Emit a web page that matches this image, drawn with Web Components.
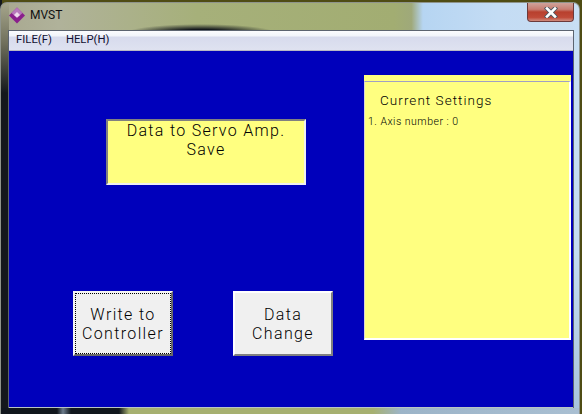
<!DOCTYPE html>
<html>
<head>
<meta charset="utf-8">
<title>MVST</title>
<style>
  html, body { margin: 0; padding: 0; background: #5b5a20; }
  body { width: 582px; height: 414px; overflow: hidden; }
</style>
</head>
<body>
<mvst-window>
  <mvst-menu slot="menu"></mvst-menu>
  <mvst-panel slot="save">Data to Servo Amp.<br>Save</mvst-panel>
  <mvst-button slot="write" focused>Write to<br>Controller</mvst-button>
  <mvst-button slot="change">Data<br>Change</mvst-button>
  <mvst-settings slot="settings"></mvst-settings>
</mvst-window>

<script>
class MvstWindow extends HTMLElement {
  constructor() {
    super();
    this.attachShadow({ mode: "open" });
    this.shadowRoot.innerHTML = `<style>
      :host {
        display: block;
        width: 582px;
        height: 414px;
        box-sizing: border-box;
        padding-top: 2px;
        background: linear-gradient(90deg, #14181c 0, #14181c 2px, #4f4c14 2px);
        font-family: Roboto, sans-serif;
      }
      .glass {
        height: 412px;
        box-sizing: border-box;
        margin-right: 2px;
        padding: 0 5px 6px 7px;
        border: 1px solid #8f948c;
        border-bottom: none;
        border-radius: 7px 7px 0 0;
        display: flex;
        flex-direction: column;
        background:
          linear-gradient(90deg, #10161c 0, #10161c 56px, #6c7c8c 62px, #10161c 70px, #10161c 118px, #a6b070 128px, #a6b070 372px, #9cb4c8 400px, #a9bfd2 100%) bottom / 100% 6px no-repeat,
          linear-gradient(#a6a68c 0, #70705c 40px, #14181c 90px, #14181c 100%) left / 8px 100% no-repeat,
          linear-gradient(#c8dff4 0, #c4dcf2 60%, #a8c4dc 100%) right / 6px 100% no-repeat,
          radial-gradient(ellipse 75px 9px at 200px 30px, #14181c 0, #14181c 40%, rgba(20,24,28,0) 100%),
          linear-gradient(90deg, #a8a890 0, #b0b29a 10%, #a6b07a 34%, #a2ad72 68%, #9fa97a 71%, #b6d5f2 73%, #c4dcf4 86%, #c8def2 100%);
      }
      .title {
        height: 27px;
        flex: none;
        display: flex;
        align-items: center;
        gap: 5px;
        position: relative;
        padding: 0 0 3px 1px;
        box-sizing: border-box;
        font-size: 12px;
        color: #101010;
      }
      .title svg { flex: none; }
      .close {
        position: absolute;
        top: 0;
        right: 0;
        width: 47px;
        height: 19px;
        box-sizing: border-box;
        border: 1px solid #6c3a3a;
        border-top: none;
        border-radius: 0 0 4px 4px;
        background: linear-gradient(#cfa29a 0, #c87e72 35%, #b8402e 50%, #c04a38 80%, #d08c7e 100%);
        display: flex;
        align-items: center;
        justify-content: center;
      }
      .client {
        flex: 1;
        display: flex;
        flex-direction: column;
        border: 1px solid #5c6470;
        border-bottom: none;
        background: #0000bb;
        min-height: 0;
      }
      .body {
        flex: 1;
        display: flex;
        min-height: 0;
        box-sizing: border-box;
        padding: 24px 2px 0 64px;
        border-bottom: 1px solid #b8c4c4;
      }
      .left {
        width: 291px;
        flex: none;
        display: flex;
        flex-direction: column;
        justify-content: space-between;
        height: 281px;
      }
      .save { padding: 44px 0 0 33px; }
      .buttons { display: flex; gap: 60px; }
      .right { flex: 1; height: 265px; display: flex; }
    </style>
    <div class="glass">
      <div class="title">
        <svg width="16" height="17" viewBox="0 0 16 17">
          <path d="M8 0.5 16 8.5 8 16.5 0 8.5Z" fill="#8a1f8c"/>
          <path d="M8 0.5 13.5 6 8 11 2.5 6Z" fill="#b878bc"/>
          <path d="M8 5 11 8 8 10.5 5 8Z" fill="#efd8ec"/>
        </svg>
        <span>MVST</span>
        <div class="close">
          <svg width="14" height="11" viewBox="0 0 14 11">
            <path d="M3 1.5 11 9.5M11 1.5 3 9.5" stroke="#4a5660" stroke-width="4.4" stroke-linecap="square"/>
            <path d="M3 1.5 11 9.5M11 1.5 3 9.5" stroke="#fff" stroke-width="2.6" stroke-linecap="square"/>
          </svg>
        </div>
      </div>
      <div class="client">
        <slot name="menu"></slot>
        <div class="body">
          <div class="left">
            <div class="save"><slot name="save"></slot></div>
            <div class="buttons"><slot name="write"></slot><slot name="change"></slot></div>
          </div>
          <div class="right"><slot name="settings"></slot></div>
        </div>
      </div>
    </div>`;
  }
}

class MvstMenu extends HTMLElement {
  constructor() {
    super();
    this.attachShadow({ mode: "open" });
    this.shadowRoot.innerHTML = `<style>
      :host {
        display: flex;
        flex: none;
        height: 20px;
        box-sizing: border-box;
        gap: 14px;
        padding: 0 0 2px 7px;
        align-items: center;
        font-size: 11.3px;
        color: #101030;
        background: linear-gradient(#fbfcfe 0, #f1f4fa 26%, #d7dbed 32%, #dfe2f0 100%);
        border-bottom: 1px solid #b8b8c4;
      }
    </style>
    <span>FILE(F)</span><span>HELP(H)</span>`;
  }
}

class MvstPanel extends HTMLElement {
  constructor() {
    super();
    this.attachShadow({ mode: "open" });
    this.shadowRoot.innerHTML = `<style>
      :host {
        display: block;
        width: 200px;
        height: 66px;
        box-sizing: border-box;
        background: #ffff80;
        border: 2px solid;
        border-color: #808080 #f0f0f0 #f0f0f0 #808080;
        text-align: center;
        font-size: 16px;
        font-weight: 300;
        line-height: 19px;
        letter-spacing: 1.3px;
        color: #000;
      }
    </style><slot></slot>`;
  }
}

class MvstButton extends HTMLElement {
  constructor() {
    super();
    this.attachShadow({ mode: "open" });
    this.shadowRoot.innerHTML = `<style>
      :host {
        display: block;
        width: 100px;
        height: 65px;
        box-sizing: border-box;
        background: #f0f0f0;
        border: 2px solid;
        border-color: #fff #808080 #808080 #fff;
        font-size: 16px;
        font-weight: 300;
        line-height: 19px;
        letter-spacing: 1.35px;
        color: #000;
        text-align: center;
      }
      :host([focused]) {
        border-color: #f4f4f4 #696969 #696969 #f4f4f4;
      }
      .face {
        height: 100%;
        box-sizing: border-box;
        display: flex;
        align-items: center;
        justify-content: center;
        border: 1px dotted transparent;
      }
      :host([focused]) .face { border-color: #000; }
    </style><div class="face"><div><slot></slot></div></div>`;
  }
}

class MvstSettings extends HTMLElement {
  constructor() {
    super();
    this.attachShadow({ mode: "open" });
    this.shadowRoot.innerHTML = `<style>
      :host {
        display: block;
        width: 207px;
        height: 265px;
        box-sizing: border-box;
        background: #ffff80;
        padding-top: 6px;
      }
      .inner {
        height: 100%;
        box-sizing: border-box;
        border: 1px solid;
        border-color: #a0a0c4 #ffffff #ffffff #d8d8d0;
        border-right-width: 2px;
        border-bottom-width: 2px;
        color: #000;
      }
      .head {
        font-size: 13.5px;
        font-weight: 300;
        letter-spacing: 1.05px;
        padding: 9px 0 0 15px;
        line-height: 18px;
      }
      .line {
        font-size: 10.5px;
        font-weight: 300;
        letter-spacing: 0.5px;
        padding: 6px 0 0 3px;
        line-height: 14px;
      }
    </style>
    <div class="inner">
      <div class="head">Current Settings</div>
      <div class="line">1. Axis number : 0</div>
    </div>`;
  }
}

customElements.define("mvst-window", MvstWindow);
customElements.define("mvst-menu", MvstMenu);
customElements.define("mvst-panel", MvstPanel);
customElements.define("mvst-button", MvstButton);
customElements.define("mvst-settings", MvstSettings);
</script>
</body>
</html>
